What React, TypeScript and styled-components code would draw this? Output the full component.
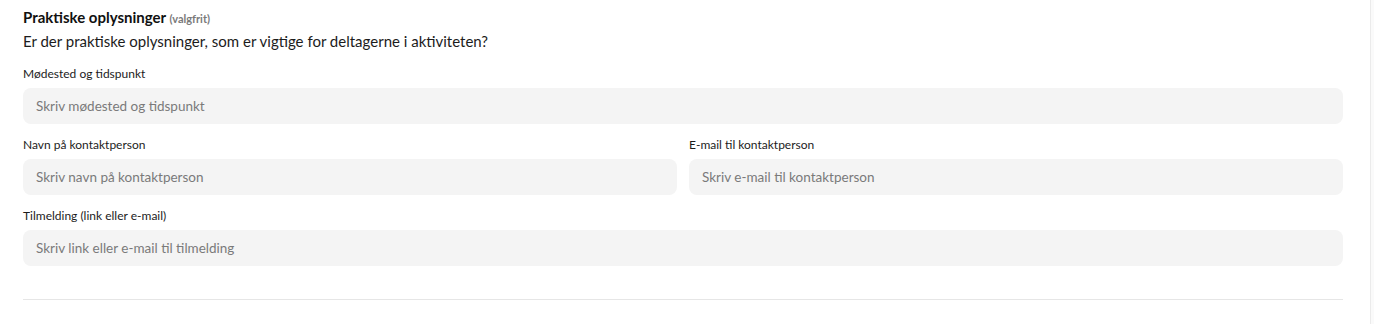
import React from "react";
import styled, { createGlobalStyle } from "styled-components";

const Global = createGlobalStyle`
  html, body { margin: 0; padding: 0; background: #fafafa; }
  body { font-family: Lato, "Liberation Sans", sans-serif; color: #1c1c1c; }
  * { box-sizing: border-box; }
`;

const Page = styled.div`
  width: 1371px;
  height: 324px;
  background: #ffffff;
  border-right: 1px solid #ebebeb;
  padding: 7px 27px 0 23px;
`;

const Section = styled.section`
  display: flex;
  flex-direction: column;
`;

const Title = styled.h3`
  margin: 0;
  font-size: 15px;
  line-height: 20px;
  font-weight: 700;
  color: #111;
`;

const Optional = styled.span`
  font-size: 11px;
  font-weight: 700;
  color: #7a7a7a;
`;

const Question = styled.p`
  margin: 0;
  font-size: 15px;
  line-height: 24px;
  color: #1c1c1c;
`;

const Fields = styled.div`
  display: grid;
  grid-template-columns: 1fr 1fr;
  column-gap: 12px;
  row-gap: 13px;
  margin-top: 13px;
`;

const Field = styled.label<{ $full?: boolean }>`
  display: flex;
  flex-direction: column;
  gap: 6px;
  grid-column: ${(p) => (p.$full ? "1 / -1" : "auto")};
`;

const Label = styled.span`
  font-size: 12px;
  line-height: 16px;
  color: #1c1c1c;
`;

const Input = styled.input`
  height: 36px;
  border: none;
  border-radius: 8px;
  background: #f4f4f4;
  padding: 0 13px;
  font-family: inherit;
  font-size: 13.5px;
  color: #1c1c1c;
  outline: none;
  &::placeholder { color: #7a7a7a; }
`;

const Divider = styled.hr`
  margin: 33px 0 0;
  border: none;
  border-top: 1px solid #e6e6e6;
`;

export default function App() {
  return (
    <>
      <Global />
      <Page>
        <Section>
          <Title>
            Praktiske oplysninger <Optional>(valgfrit)</Optional>
          </Title>
          <Question>Er der praktiske oplysninger, som er vigtige for deltagerne i aktiviteten?</Question>
          <Fields>
            <Field $full>
              <Label>Mødested og tidspunkt</Label>
              <Input placeholder="Skriv mødested og tidspunkt" />
            </Field>
            <Field>
              <Label>Navn på kontaktperson</Label>
              <Input placeholder="Skriv navn på kontaktperson" />
            </Field>
            <Field>
              <Label>E-mail til kontaktperson</Label>
              <Input placeholder="Skriv e-mail til kontaktperson" />
            </Field>
            <Field $full>
              <Label>Tilmelding (link eller e-mail)</Label>
              <Input placeholder="Skriv link eller e-mail til tilmelding" />
            </Field>
          </Fields>
          <Divider />
        </Section>
      </Page>
    </>
  );
}
